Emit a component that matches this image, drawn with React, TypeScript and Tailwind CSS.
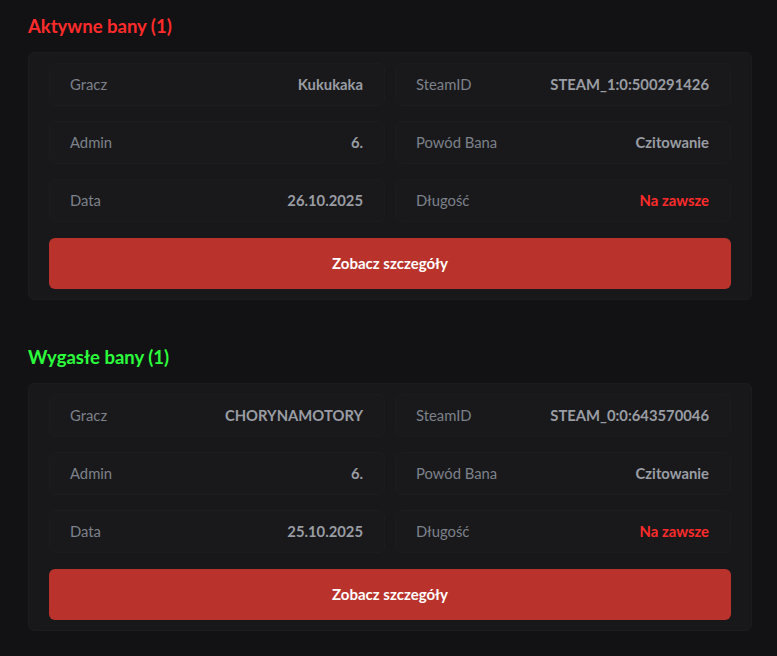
import React from "react";

type Ban = {
  player: string;
  steamId: string;
  admin: string;
  reason: string;
  date: string;
  length: string;
};

const active: Ban[] = [
  {
    player: "Kukukaka",
    steamId: "STEAM_1:0:500291426",
    admin: "6.",
    reason: "Czitowanie",
    date: "26.10.2025",
    length: "Na zawsze",
  },
];

const expired: Ban[] = [
  {
    player: "CHORYNAMOTORY",
    steamId: "STEAM_0:0:643570046",
    admin: "6.",
    reason: "Czitowanie",
    date: "25.10.2025",
    length: "Na zawsze",
  },
];

function Cell({ label, value, danger }: { label: string; value: string; danger?: boolean }) {
  return (
    <div className="flex h-[43px] items-center justify-between rounded-md border border-[#1c1c1f] bg-[#19191b] pl-5 pr-[21px]">
      <span className="text-[14.8px] text-[#7d828b]">{label}</span>
      <span className={`text-[14.8px] font-bold ${danger ? "text-[#ff2b2b]" : "text-[#9a9da4]"}`}>{value}</span>
    </div>
  );
}

function BanCard({ ban }: { ban: Ban }) {
  return (
    <div className="rounded-md border border-[#1c1c1f] bg-[#18181a] px-[20px] pt-[10px] pb-[10px]">
      <div className="grid grid-cols-2 gap-x-[10px] gap-y-[15px]">
        <Cell label="Gracz" value={ban.player} />
        <Cell label="SteamID" value={ban.steamId} />
        <Cell label="Admin" value={ban.admin} />
        <Cell label="Powód Bana" value={ban.reason} />
        <Cell label="Data" value={ban.date} />
        <Cell label="Długość" value={ban.length} danger />
      </div>
      <button className="mt-4 flex h-[51px] w-full items-center justify-center rounded-md bg-[#b9332c] text-[15px] font-bold text-white">
        Zobacz szczegóły
      </button>
    </div>
  );
}

function Section({ title, color, bans }: { title: string; color: string; bans: Ban[] }) {
  return (
    <section>
      <h2 className={`mb-3 text-[18.5px] font-bold leading-7 ${color}`}>{title}</h2>
      <div className="space-y-4">
        {bans.map((b) => (
          <BanCard key={b.steamId} ban={b} />
        ))}
      </div>
    </section>
  );
}

export default function App() {
  return (
    <div
      className="min-h-[656px] bg-[#121214] pl-[28px] pr-[25px] pt-3 pb-6"
      style={{ fontFamily: "Lato, 'Noto Sans', sans-serif" }}
    >
      <div className="space-y-[43px]">
        <Section title={`Aktywne bany (${active.length})`} color="text-[#ff2b2b]" bans={active} />
        <Section title={`Wygasłe bany (${expired.length})`} color="text-[#2bff3c]" bans={expired} />
      </div>
    </div>
  );
}
